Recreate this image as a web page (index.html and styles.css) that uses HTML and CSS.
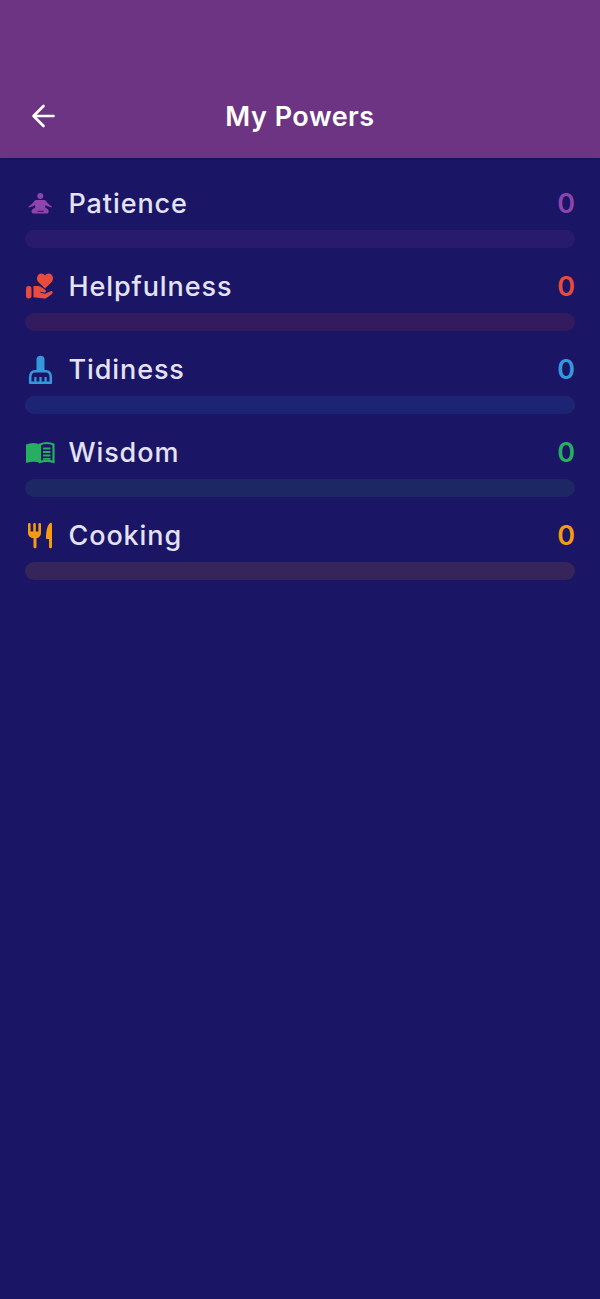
FILE: index.html
```html
<!DOCTYPE html>
<html lang="en">
<head>
    <meta charset="UTF-8">
    <meta name="viewport" content="width=device-width, initial-scale=1.0">
    <title>My Powers</title>
    <link rel="stylesheet" href="styles.css">
</head>
<body>
    <header class="app-bar">
        <svg class="back" viewBox="0 0 26 26" fill="none" stroke="#fff" stroke-width="2.600" stroke-linecap="round" stroke-linejoin="round">
            <path d="M23.500 13H3.500M13.500 3 3.500 13l10 10"/>
        </svg>
        <h1>My Powers</h1>
        <span class="spacer"></span>
    </header>

    <main class="powers">
        <section class="power patience">
            <div class="power-head">
                <svg class="icon" viewBox="0 0 30 30" fill="currentColor">
                    <circle cx="15.300" cy="8" r="3"/>
                    <path d="M11.800 12h7c1 0 1.800.4 2.400 1.300 1.200 1.700 3.100 3.500 5.900 5.500l-.4.700c-2.600-.4-4.800-1.300-6.400-2.500v2.800l1.800.9c2.200 1.100 2.500 4.800-1 4.800H9.200c-3.500 0-3.200-3.700-1-4.800l1.900-.9V17c-1.600 1.200-3.800 2.100-6.400 2.500l-.4-.7c2.800-2 4.700-3.800 5.900-5.500.6-.9 1.600-1.300 2.600-1.300z"/>
                    <path d="M12.500 22.800h6.500v.9h-6.500z" fill="#1b1565"/>
                </svg>
                <span class="name">Patience</span>
                <span class="score">0</span>
            </div>
            <div class="track"></div>
        </section>

        <section class="power helpfulness">
            <div class="power-head">
                <svg class="icon" viewBox="0 0 30 30" fill="currentColor">
                    <path d="M20 17.500 13.500 11.200C10.500 8.300 12.200 2.500 16.200 2.500c1.600 0 2.900.8 3.800 2.100.9-1.300 2.200-2.100 3.800-2.100 4 0 5.700 5.800 2.700 8.700z"/>
                    <rect x="1" y="15" width="5.500" height="12.500" rx="2.700"/>
                    <path d="M8.500 15h4c1.600 0 3 .5 4.300 1.500l3.200 2c1.800 1.200.8 3.500-1.200 3.100l-3.300-.8v.9l4.500 1 5.700-2.500c1.800-.7 2.800 1.600 1.300 2.700l-5.500 4.100c-.7.500-1.400.6-2.300.5L8.500 26.300z"/>
                </svg>
                <span class="name">Helpfulness</span>
                <span class="score">0</span>
            </div>
            <div class="track"></div>
        </section>

        <section class="power tidiness">
            <div class="power-head">
                <svg class="icon" viewBox="0 0 30 30" fill="currentColor">
                    <path d="M11.500 5c0-4.500 8-4.500 8 0v12h-8z"/>
                    <path d="M10 17.300h11c3.700 0 4.800 3 4.800 6.200v5.200H5.200v-5.200c0-3.200 1.100-6.200 4.800-6.200z" fill="none" stroke="currentColor" stroke-width="2.600" stroke-linejoin="round"/>
                    <path d="M9.300 23h2.200v5H9.300zM14.400 23h2.200v5h-2.200zM19.500 23h2.200v5h-2.200z"/>
                </svg>
                <span class="name">Tidiness</span>
                <span class="score">0</span>
            </div>
            <div class="track"></div>
        </section>

        <section class="power wisdom">
            <div class="power-head">
                <svg class="icon" viewBox="0 0 30 30" fill="currentColor">
                    <path d="M1 7.500c5-2 10-2 14.500 0v18.500c-4.500-1.800-9.500-1.800-14.500 0z"/>
                    <path d="M15 7.500c4.500-2 9-2 13.500 0v17.500c-4.500-1.600-9-1.600-13.500 0z" fill="#1b1565" stroke="currentColor" stroke-width="2.200"/>
                    <path d="M18 10.500h7.500v2H18zM18 14h7.500v2H18zM18 17.500h7.500v2H18zM18 21h7.500v1.800H18z"/>
                </svg>
                <span class="name">Wisdom</span>
                <span class="score">0</span>
            </div>
            <div class="track"></div>
        </section>

        <section class="power cooking">
            <div class="power-head">
                <svg class="icon" viewBox="0 0 30 30" fill="currentColor">
                    <path d="M3 4c0-1.500 2.600-1.500 2.600 0v7.500h2.600V4c0-1.500 2.600-1.500 2.600 0v7.500h2.600V4c0-1.500 2.600-1.500 2.600 0v9c0 2.800-2 4.800-4.500 5.300V27c0 1.700-3 1.700-3 0v-8.700C5 17.800 3 15.800 3 13z"/>
                    <path d="M24.500 3.500c1.500-1.300 2.500-.5 2.500 1V27c0 1.700-3 1.700-3 0v-8h-2c-.7 0-1-.4-1-1 0-6 1-11.800 3.500-14.500z"/>
                </svg>
                <span class="name">Cooking</span>
                <span class="score">0</span>
            </div>
            <div class="track"></div>
        </section>
    </main>
</body>
</html>
```

FILE: styles.css
```css
* {
    margin: 0;
    padding: 0;
    box-sizing: border-box;
    font-family: 'Inter', 'Liberation Sans', sans-serif;
}

html, body {
    height: 100%;
}

body {
    background: #1b1565;
    color: #e4e2f6;
    overflow: hidden;
}

.app-bar {
    height: 158px;
    padding: 0 30px 29px;
    display: flex;
    align-items: flex-end;
    background: #6c3483;
    color: #fff;
    box-shadow: 0 1px 2px rgba(0, 0, 0, 0.15);
}

.back {
    width: 26px;
    height: 26px;
    flex: none;
}

.app-bar h1 {
    flex: 1;
    text-align: center;
    font-size: 27px;
    line-height: 25px;
    font-weight: 600;
    letter-spacing: 0.5px;
}

.spacer {
    width: 26px;
    flex: none;
}

.powers {
    padding: 28px 25px 0;
}

.power {
    margin-bottom: 21px;
}

.power-head {
    height: 34px;
    margin-bottom: 10px;
    display: flex;
    align-items: center;
}

.icon {
    width: 30px;
    height: 30px;
    flex: none;
    margin-right: 13.500px;
}

.name {
    flex: 1;
    font-size: 27px;
    font-weight: 500;
    letter-spacing: 0.9px;
}

.score {
    font-size: 27px;
    font-weight: 600;
}

.track {
    height: 18px;
    border-radius: 9px;
}

.patience .icon, .patience .score { color: #8e44ad; }
.helpfulness .icon, .helpfulness .score { color: #e74c3c; }
.tidiness .icon, .tidiness .score { color: #3498db; }
.wisdom .icon, .wisdom .score { color: #27ae60; }
.cooking .icon, .cooking .score { color: #f39c12; }

.patience .track { background: rgba(142, 68, 173, 0.12); }
.helpfulness .track { background: rgba(231, 76, 60, 0.12); }
.tidiness .track { background: rgba(52, 152, 219, 0.12); }
.wisdom .track { background: rgba(39, 174, 96, 0.12); }
.cooking .track { background: rgba(243, 156, 18, 0.12); }
```
